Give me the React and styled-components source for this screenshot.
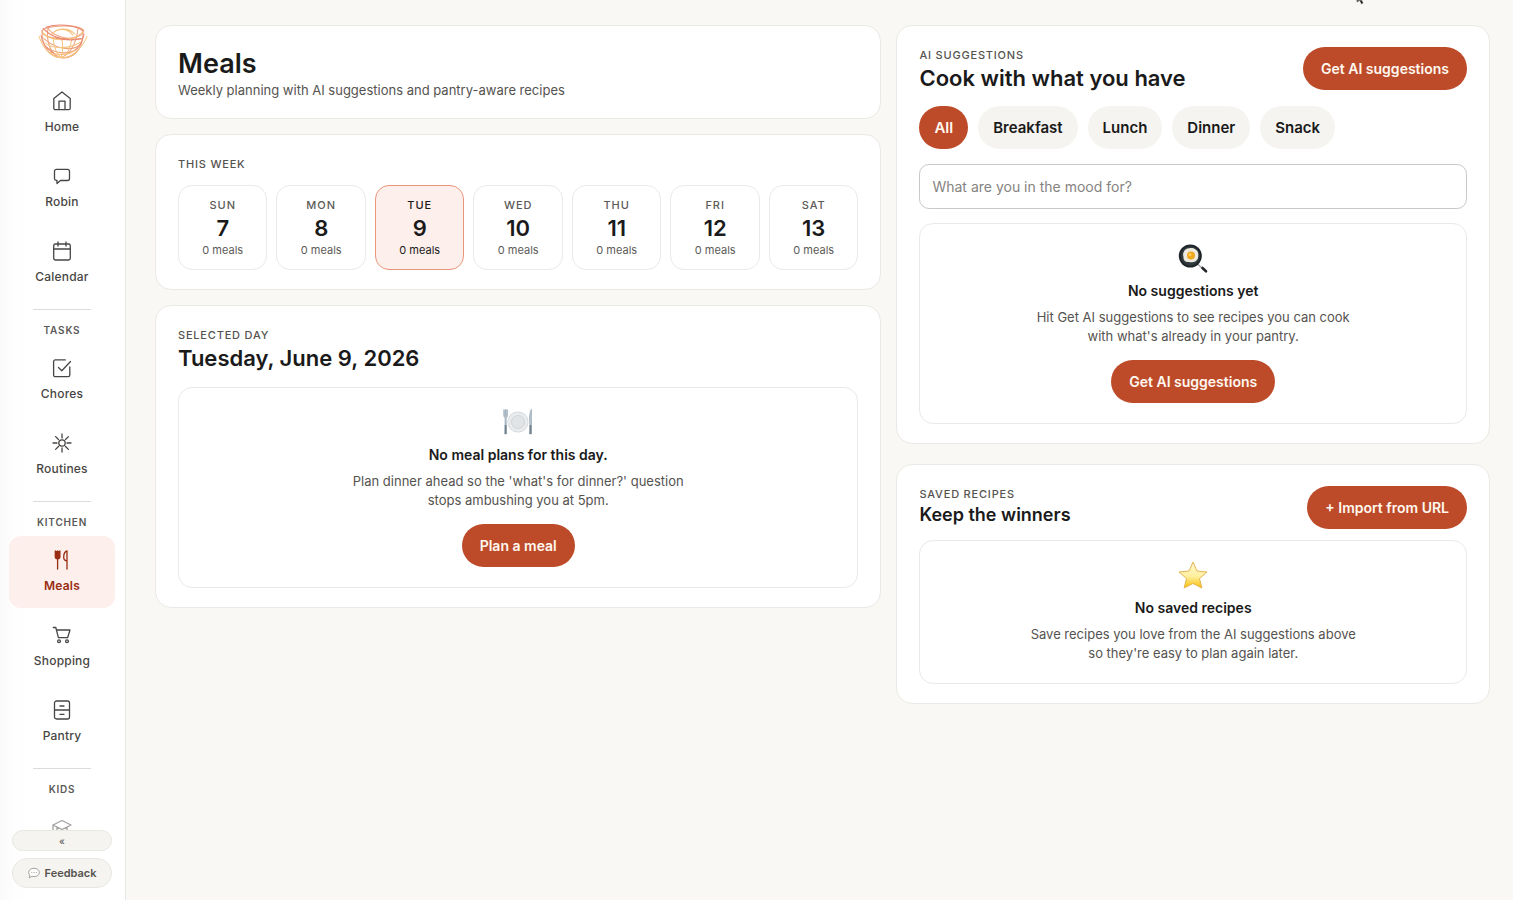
import React from "react";
import styled, { createGlobalStyle, css } from "styled-components";

const Global = createGlobalStyle`
  *, *::before, *::after { box-sizing: border-box; }
  html, body { margin: 0; background: #faf8f4; }
  body { font-family: Inter, "Liberation Sans", sans-serif; color: #1a1a1a; }
  button, input { font: inherit; color: inherit; }
  h1, h2, h3, p { margin: 0; }
`;

const Shell = styled.div`
  position: relative;
  display: flex;
  min-height: 100vh;
`;

const Sidebar = styled.aside`
  position: sticky;
  top: 0;
  flex: 0 0 126px;
  height: 100vh;
  display: flex;
  flex-direction: column;
  background: linear-gradient(90deg, #fafafa 0, #fefefe 16px, #fff 32px);
  border-right: 1px solid #e9e7e3;
`;

const LogoLink = styled.a`
  flex: none;
  display: flex;
  justify-content: center;
  padding: 24px 0 0;
  height: 64px;
`;

const Nav = styled.nav`
  flex: 1;
  min-height: 0;
  overflow: hidden;
  display: flex;
  flex-direction: column;
  gap: 3px;
  padding: 13px 10px 0 9px;
`;

const NavLink = styled.a`
  flex: none;
  height: 72px;
  display: flex;
  flex-direction: column;
  align-items: center;
  gap: 8px;
  padding-top: 14px;
  border-radius: 12px;
  font-size: 12px;
  line-height: 16px;
  letter-spacing: 0.2px;
  text-decoration: none;
  font-weight: ${(p) => (p.$active ? 600 : 500)};
  color: ${(p) => (p.$active ? "#9a2c12" : "#484644")};
  background: ${(p) => (p.$active ? "#fdefeb" : "transparent")};
  svg { display: block; }
`;

const NavHeading = styled.h3`
  flex: none;
  width: 58px;
  align-self: center;
  display: flex;
  justify-content: center;
  margin-top: 7px;
  padding: 13px 0 4px;
  border-top: 1px solid #dedcd8;
  font-size: 10px;
  line-height: 14px;
  font-weight: 600;
  letter-spacing: 0.8px;
  color: #5c5a57;
`;

const SideFooter = styled.div`
  flex: none;
  display: flex;
  flex-direction: column;
  gap: 7px;
  padding: 0 13px 12px 12px;
`;

const SideButton = styled.button`
  height: ${(p) => (p.$small ? 21 : 30)}px;
  display: flex;
  align-items: center;
  justify-content: center;
  gap: 5px;
  padding: 0;
  border: 1px solid #e9e7e2;
  border-radius: 15px;
  background: #f5f4f0;
  font-size: ${(p) => (p.$small ? 10 : 11)}px;
  line-height: 14px;
  font-weight: ${(p) => (p.$small ? 400 : 600)};
  color: #55534f;
`;

const Main = styled.main`
  flex: 1;
  min-width: 0;
  display: grid;
  grid-template-columns: minmax(0, 727fr) minmax(0, 594fr);
  align-items: start;
  gap: 15px;
  padding: 25px 23px 25px 29px;
`;

const Column = styled.div`
  display: flex;
  flex-direction: column;
  gap: ${(p) => p.$gap}px;
`;

const Card = styled.section`
  background: #fff;
  border: 1px solid #ebe9e5;
  border-radius: 16px;
  padding: 21px 22px 19px;
`;

const Title = styled.h1`
  font-size: 27px;
  line-height: 34px;
  font-weight: 600;
`;

const Subtitle = styled.p`
  font-size: 13px;
  line-height: 18px;
  color: #55534f;
`;

const Eyebrow = styled.p`
  font-size: 11px;
  line-height: 16px;
  font-weight: 500;
  letter-spacing: 0.8px;
  color: #55534f;
`;

const Heading = styled.h2`
  font-size: ${(p) => (p.$small ? 18 : 22)}px;
  line-height: ${(p) => (p.$small ? 26 : 30)}px;
  font-weight: 600;
`;

const Days = styled.div`
  display: grid;
  grid-template-columns: repeat(7, minmax(0, 1fr));
  gap: 9px;
  margin-top: 13px;
`;

const Day = styled.button`
  display: flex;
  flex-direction: column;
  align-items: center;
  padding: 11px 0 12px;
  border: 1px solid ${(p) => (p.$selected ? "#e9957c" : "#ebe9e5")};
  border-radius: 14px;
  background: ${(p) => (p.$selected ? "#fdefeb" : "#fff")};
  color: ${(p) => (p.$selected ? "#1a1a1a" : "#5c5a57")};
`;

const DayName = styled.span`
  font-size: 11px;
  line-height: 16px;
  font-weight: 500;
  letter-spacing: 1px;
`;

const DayNumber = styled.span`
  font-size: 22px;
  line-height: 30px;
  font-weight: 600;
  color: #1a1a1a;
`;

const DayCount = styled.span`
  font-size: 11px;
  line-height: 14px;
`;

const CardHead = styled.div`
  display: flex;
  justify-content: space-between;
  align-items: flex-start;
  gap: 16px;
`;

const pill = css`
  height: 43px;
  border: 0;
  border-radius: 22px;
  line-height: 20px;
  font-weight: 600;
  white-space: nowrap;
`;

const PrimaryButton = styled.button`
  ${pill}
  padding: 0 18px;
  font-size: 14px;
  background: #bd4b29;
  color: #fff8f0;
`;

const Chip = styled.button`
  ${pill}
  padding: 0 15px;
  font-size: 15px;
  background: ${(p) => (p.$active ? "#bd4b29" : "#f5f4f0")};
  color: ${(p) => (p.$active ? "#fff8f0" : "#1a1a1a")};
`;

const Chips = styled.div`
  display: flex;
  flex-wrap: wrap;
  gap: 10px;
  margin-top: 13px;
`;

const MoodInput = styled.input`
  display: block;
  width: 100%;
  height: 45px;
  margin-top: 15px;
  padding: 0 12px;
  border: 1px solid #cbc9c6;
  border-radius: 10px;
  background: #fff;
  font-size: 14px;
  &::placeholder { color: #858381; opacity: 1; }
`;

const Empty = styled.div`
  display: flex;
  flex-direction: column;
  align-items: center;
  margin-top: ${(p) => p.$top}px;
  padding: 20px 16px;
  border: 1px solid #ebe9e5;
  border-radius: 14px;
  text-align: center;
  svg { display: block; }
`;

const EmptyTitle = styled.h3`
  margin-top: 6px;
  font-size: 14px;
  line-height: 22px;
  font-weight: 600;
`;

const EmptyText = styled.p`
  max-width: 360px;
  margin: 6px 0 ${(p) => (p.$last ? 0 : 14)}px;
  font-size: 13px;
  line-height: 19px;
  color: #55534f;
`;

const Pointer = styled.svg`
  position: absolute;
  top: 0;
  right: 148px;
`;

function Icon({ children }) {
  return (
    <svg width="20" height="20" viewBox="0 0 20 20" fill="none" stroke="currentColor" strokeWidth="1.3" strokeLinecap="round" strokeLinejoin="round" aria-hidden="true">
      {children}
    </svg>
  );
}

const icons = {
  home: <Icon><path d="M1.8 7.500 10 1l8.200 6.500v9.700a1.500 1.500 0 0 1-1.500 1.500H3.300a1.500 1.500 0 0 1-1.500-1.500zM7 18.700V10.200h6v8.500" /></Icon>,
  chat: <Icon><path d="M4.500 3.300h11a2 2 0 0 1 2 2v7.200a2 2 0 0 1-2 2H8.500L5 17.500v-3h-.5a2 2 0 0 1-2-2V5.300a2 2 0 0 1 2-2z" /></Icon>,
  calendar: <Icon><rect x="1.700" y="3" width="16.600" height="16" rx="1.800" /><path d="M1.700 8h16.600M6 1v4M14 1v4" /></Icon>,
  check: <Icon><path d="M17.800 9v8a1.700 1.700 0 0 1-1.700 1.700H3.300A1.700 1.700 0 0 1 1.600 17V3.600a1.700 1.700 0 0 1 1.700-1.700h10M6.500 9.500l3.300 3.200L18.500 3.500" /></Icon>,
  sun: <Icon><circle cx="10" cy="10" r="3.200" /><path d="M10 1v4M10 15v4M1 10h4M15 10h4M3.600 3.600l2.900 2.900M13.500 13.500l2.900 2.900M3.600 16.400l2.900-2.900M13.500 6.500l2.900-2.900" /></Icon>,
  meals: <Icon><path d="M3.300 1v5.500c0 1.500 1 2.300 2.300 2.300s2.300-.8 2.300-2.300V1M5.600 1v18M15 19V1c-2.200.6-3.300 3-3.300 6s1 3.800 3.300 3.800" /><path d="M3.300 1h4.600v5.500a2.300 2.300 0 0 1-4.600 0z" fill="currentColor" stroke="none" /></Icon>,
  cart: <Icon><path d="M1.300 2.500h2.500l2.600 10.200h9.200L18 5H4.500" /><circle cx="7" cy="16.300" r="1.400" /><circle cx="15" cy="16.300" r="1.400" /></Icon>,
  pantry: <Icon><rect x="2.500" y="1" width="15" height="18" rx="2" /><path d="M2.500 10h15M8 6h4M8 14.300h4" /></Icon>,
  kids: <Icon><path d="M10 3.500 1 8l9 4.500L19 8zM1 8v6M5 10v5c2 2.500 8 2.500 10 0v-5" opacity=".5" /></Icon>,
};

function Logo() {
  return (
    <svg width="50" height="36" viewBox="0 1 50 32" preserveAspectRatio="none" fill="none" strokeLinecap="round" aria-hidden="true">
      <g stroke="#eda27c" strokeWidth="1">
        <path d="M4 7C8 2 39 1 45 6c2 4-5 8-19 8C12 14 3 11 4 7z" />
        <path d="M4 7c0 13 6 23 20 24C39 32 46 19 45 6" />
        <path d="M10 4c2 7 20 12 34 10M6 14c11 9 28 12 37 5M9 22c9 5 22 7 30 1" />
        <path d="M40 5c-2 16-9 23-17 26M10 5c-2 10 2 22 10 25" />
      </g>
      <g stroke="#f6c27d" strokeWidth="1">
        <path d="M1 12c4 11 13 19 23 19s20-8 25-19" />
        <path d="M5 9c7 7 28 9 40-1M7 18c10 6 25 5 36-1M12 26c7 3 18 3 24-1" />
        <path d="M15 13c1 9 4 15 8 18M24 14c1 6 1 12-1 17M34 13c-1 9-5 15-10 18" />
        <path d="M14 10c5-6 17-6 23 0M18 7c7-3 14 0 17 4" />
      </g>
      <g stroke="#ec8872" strokeWidth="1">
        <path d="M5 5c9 8 22 12 38 9M8 4C20 0 37 2 45 7M3 11c1 8 7 13 13 16M46 10c-1 6-4 10-8 14" />
      </g>
    </svg>
  );
}

function PlateArt() {
  return (
    <svg width="32" height="30" viewBox="0 0 32 30" aria-hidden="true">
      <circle cx="16" cy="14" r="10.500" fill="#d3d7db" />
      <circle cx="16" cy="14" r="9.800" fill="#e9ebed" />
      <circle cx="16" cy="14" r="6.500" fill="#e1e4e7" stroke="#c6cbcf" strokeWidth=".7" />
      <path d="M1.700 1.500V7c0 2 1 2.500 1.400 3L2.700 26h1.900l-.4-16c.8-.5 1.400-1 1.400-3V1.500M3.600 1.500V8" fill="#b4c2ce" stroke="#94a6b4" strokeWidth=".6" />
      <path d="M29 1.500c-1.500 4-2 9-1.300 12.500l-.2 12h2V1.500z" fill="#b4c2ce" stroke="#8799a6" strokeWidth=".5" />
      <path d="M2.800 17h1.700v9H2.800zM27.700 17h1.700v9h-1.700z" fill="#71818c" />
    </svg>
  );
}

function PanArt() {
  return (
    <svg width="32" height="30" viewBox="0 0 32 30" aria-hidden="true">
      <path d="M20.500 20l9 8" stroke="#a5a9ab" strokeWidth="1.500" />
      <path d="M25.500 24l3.500 3.300" stroke="#25292b" strokeWidth="2.600" strokeLinecap="round" />
      <circle cx="13.300" cy="12" r="11.500" fill="#1e2528" />
      <circle cx="13.300" cy="12" r="9.700" fill="#30393d" />
      <path d="M7.500 6.500c3-3 8.500-3 11-1 3.500 2 3 5.500 2.500 8.500-1.500 4.500-6 4.500-9 4-4 .5-6-2.500-5.500-5-1-3 0-4.500 1-6.500z" fill="#eeeae0" />
      <circle cx="14" cy="11.500" r="4" fill="#efa91f" />
      <circle cx="13" cy="10.500" r="1.500" fill="#ffcf58" />
    </svg>
  );
}

function StarArt() {
  return (
    <svg width="32" height="30" viewBox="0 0 32 30" aria-hidden="true">
      <defs>
        <linearGradient id="star" x1="0" y1="0" x2="0" y2="1">
          <stop offset="0" stopColor="#fff6cf" />
          <stop offset=".55" stopColor="#fff0a0" />
          <stop offset="1" stopColor="#f9bd00" />
        </linearGradient>
      </defs>
      <path d="M16 1l4 9 10 1-7.500 6.500 2.400 9.500L16 22.500 7.100 27l2.400-9.500L2 11l10-1z" fill="url(#star)" stroke="#e5b453" strokeLinejoin="round" />
    </svg>
  );
}

const nav = [
  { items: [["Home", "home"], ["Robin", "chat"], ["Calendar", "calendar"]] },
  { title: "TASKS", items: [["Chores", "check"], ["Routines", "sun"]] },
  { title: "KITCHEN", items: [["Meals", "meals"], ["Shopping", "cart"], ["Pantry", "pantry"]] },
  { title: "KIDS", items: [["School", "kids"]] },
];

const days = [["SUN", 7], ["MON", 8], ["TUE", 9], ["WED", 10], ["THU", 11], ["FRI", 12], ["SAT", 13]];

export default function App() {
  return (
    <>
      <Global />
      <Shell>
        <Sidebar>
          <LogoLink href="#" aria-label="Dashboard"><Logo /></LogoLink>
          <Nav>
            {nav.map((group, i) => (
              <React.Fragment key={i}>
                {group.title && <NavHeading>{group.title}</NavHeading>}
                {group.items.map(([label, icon]) => (
                  <NavLink key={label} href="#" $active={label === "Meals"} aria-label={label}>
                    {icons[icon]}
                    {icon !== "kids" && label}
                  </NavLink>
                ))}
              </React.Fragment>
            ))}
          </Nav>
          <SideFooter>
            <SideButton type="button" $small aria-label="Collapse sidebar">«</SideButton>
            <SideButton type="button">
              <svg width="12" height="12" viewBox="0 0 12 12" fill="#fff" stroke="#8f8d89" strokeWidth=".8" aria-hidden="true">
                <path d="M6 1.300c3 0 5.300 1.700 5.300 4.200S9 9.600 6 9.600c-.7 0-1.400-.1-2-.3L1.200 10.800l.7-2.500C1.100 7.600.7 6.600.7 5.500.7 3 3 1.300 6 1.300z" />
                <path d="M3.300 5.500h1M5.600 5.500h1M7.900 5.500h1" />
              </svg>
              Feedback
            </SideButton>
          </SideFooter>
        </Sidebar>

        <Main>
          <Column $gap={15}>
            <Card>
              <Title>Meals</Title>
              <Subtitle>Weekly planning with AI suggestions and pantry-aware recipes</Subtitle>
            </Card>
            <Card>
              <Eyebrow>THIS WEEK</Eyebrow>
              <Days>
                {days.map(([name, number]) => (
                  <Day key={name} type="button" $selected={name === "TUE"}>
                    <DayName>{name}</DayName>
                    <DayNumber>{number}</DayNumber>
                    <DayCount>0 meals</DayCount>
                  </Day>
                ))}
              </Days>
            </Card>
            <Card>
              <Eyebrow>SELECTED DAY</Eyebrow>
              <Heading>Tuesday, June 9, 2026</Heading>
              <Empty $top={14}>
                <PlateArt />
                <EmptyTitle>No meal plans for this day.</EmptyTitle>
                <EmptyText>Plan dinner ahead so the 'what's for dinner?' question<br />stops ambushing you at 5pm.</EmptyText>
                <PrimaryButton type="button">Plan a meal</PrimaryButton>
              </Empty>
            </Card>
          </Column>

          <Column $gap={20}>
            <Card>
              <CardHead>
                <div>
                  <Eyebrow>AI SUGGESTIONS</Eyebrow>
                  <Heading>Cook with what you have</Heading>
                </div>
                <PrimaryButton type="button">Get AI suggestions</PrimaryButton>
              </CardHead>
              <Chips>
                {["All", "Breakfast", "Lunch", "Dinner", "Snack"].map((name) => (
                  <Chip key={name} type="button" $active={name === "All"}>{name}</Chip>
                ))}
              </Chips>
              <MoodInput type="text" aria-label="What are you in the mood for?" placeholder="What are you in the mood for?" />
              <Empty $top={14}>
                <PanArt />
                <EmptyTitle>No suggestions yet</EmptyTitle>
                <EmptyText>Hit Get AI suggestions to see recipes you can cook<br />with what's already in your pantry.</EmptyText>
                <PrimaryButton type="button">Get AI suggestions</PrimaryButton>
              </Empty>
            </Card>
            <Card>
              <CardHead>
                <div>
                  <Eyebrow>SAVED RECIPES</Eyebrow>
                  <Heading $small>Keep the winners</Heading>
                </div>
                <PrimaryButton type="button">+ Import from URL</PrimaryButton>
              </CardHead>
              <Empty $top={11}>
                <StarArt />
                <EmptyTitle>No saved recipes</EmptyTitle>
                <EmptyText $last>Save recipes you love from the AI suggestions above<br />so they're easy to plan again later.</EmptyText>
              </Empty>
            </Card>
          </Column>
        </Main>
        <Pointer width="10" height="5" viewBox="0 0 10 5" aria-hidden="true">
          <path d="M1 0h6l1.500 3-2 1.500L4.500 1 2 2.500z" fill="#222" stroke="#fff" strokeWidth=".6" />
        </Pointer>
      </Shell>
    </>
  );
}
